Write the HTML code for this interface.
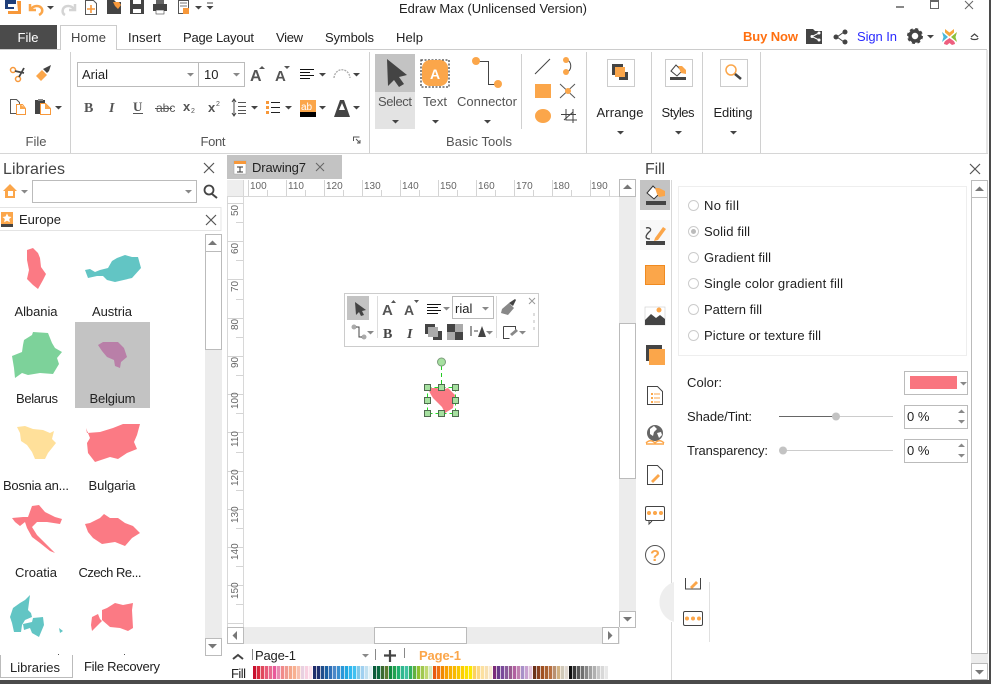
<!DOCTYPE html>
<html><head><meta charset="utf-8"><title>Edraw Max</title>
<style>
html,body{margin:0;padding:0;background:#fff;width:991px;height:684px;overflow:hidden}
svg{display:block;position:absolute;left:0;top:0}
text{font-family:"Liberation Sans","Noto Sans CJK SC",sans-serif;font-size:13px;fill:#222}
.s{font-size:12.5px}
.l{font-size:16px;fill:#444}
.g{fill:#555}
.r{font-size:10px;fill:#666}
.m{text-anchor:middle}
</style></head><body>
<svg width="991" height="684" viewBox="0 0 991 684" xmlns="http://www.w3.org/2000/svg">
<defs>
<path id="a" d="M0 0h7l-3.500 3.500z" fill="#444"/>
<path id="ag" d="M0 0h7l-3.500 3.500z" fill="#888"/>
<path id="x" d="M0 0l10 10M10 0l-10 10" stroke="#555" stroke-width="1.200" fill="none"/>
</defs>
<rect width="991" height="684" fill="#fff"/>

<!-- quick access -->
<path d="M5 0h11v4h-8v3h6v2h-6v0h-3z" fill="#1f3f7a"/><path d="M17 1h4v13h-13v-3h10z" fill="#f7983a"/>
<path d="M30 4v6h6M31 9c3-4 9-4 11 0 1 3-1 5-3 6" fill="none" stroke="#fba64a" stroke-width="2.500"/>
<use href="#a" x="47" y="6"/>
<path d="M75 4v6h-6M74 9c-3-4-9-4-11 0-1 3 0 5 2 6" fill="none" stroke="#d4d4d4" stroke-width="2.500"/>
<path d="M85.500 0.500h8l3 3v11h-11z" fill="#fff" stroke="#555"/><path d="M91 5v8M87 9h8" stroke="#f7983a" stroke-width="1.600"/>
<path d="M107 0h7l2 2h5v12h-14z" fill="#444"/><path d="M113 2h6l2 3-3 4-3-3z" fill="#f7983a"/>
<path d="M130 0h14v14h-14z" fill="#444"/><rect x="133" y="9" width="8" height="4" fill="#fff"/><rect x="133" y="0" width="8" height="4" fill="#fff"/>
<path d="M153 4h14v7h-14z" fill="#444"/><rect x="156" y="0" width="8" height="4" fill="#666"/><rect x="156" y="10" width="8" height="4" fill="#fff" stroke="#444" stroke-width=".6"/>
<path d="M178.500 .5h10v13h-10z" fill="#fff" stroke="#555"/><path d="M180 3h7M180 6h7" stroke="#777"/><path d="M183 8h6v6h-6z" fill="#f7983a"/>
<use href="#a" x="195" y="6"/>
<path d="M207 3h6" stroke="#444"/><use href="#a" x="206.500" y="6"/>

<text x="399" y="13" textLength="188" lengthAdjust="spacingAndGlyphs">Edraw Max (Unlicensed Version)</text>
<rect x="896" y="6" width="8" height="2" fill="#888"/>
<rect x="930.500" y="0.500" width="8" height="8" fill="none" stroke="#666"/><rect x="930" y="0" width="9" height="2" fill="#666"/>
<path d="M965 1l8 8M973 1l-8 8" stroke="#666" fill="none"/>

<!-- tab strip -->
<rect x="0" y="25" width="57" height="24" fill="#4b4b4b"/>
<text x="28" y="42" class="m" style="fill:#fff">File</text>
<path d="M60.500 50V25.500h56V50" fill="#fff" stroke="#ccc"/>
<path d="M0 49.500h60M117 49.500h870" stroke="#ccc"/>
<text x="71" y="42" style="fill:#444" textLength="35">Home</text>
<text x="128" y="42" textLength="33">Insert</text>
<text x="183" y="42" textLength="71">Page Layout</text>
<text x="276" y="42" textLength="27">View</text>
<text x="325" y="42" textLength="49">Symbols</text>
<text x="396" y="42" textLength="27">Help</text>
<text x="743" y="41" textLength="55" style="font-weight:bold;fill:#ff6f0f">Buy Now</text>
<path d="M806 29h7l2 2h7v13h-16z" fill="#444"/><path d="M819 33l-7 3.500 7 3.500" stroke="#fff" fill="none"/><circle cx="812" cy="36.500" r="1.500" fill="#fff"/><circle cx="819" cy="33" r="1.500" fill="#fff"/><circle cx="819" cy="40" r="1.500" fill="#fff"/>
<path d="M844 32l-7 5 7 5" stroke="#444" fill="none"/><circle cx="845" cy="32" r="2.500" fill="#444"/><circle cx="836" cy="37" r="2.500" fill="#444"/><circle cx="845" cy="42" r="2.500" fill="#444"/>
<text x="857" y="41" textLength="40" style="fill:#2a2aff">Sign In</text>
<circle cx="915" cy="36" r="5" fill="none" stroke="#444" stroke-width="3.500"/><circle cx="915" cy="36" r="7" fill="none" stroke="#444" stroke-width="2" stroke-dasharray="3 2.500"/>
<use href="#a" x="927" y="35"/>
<path d="M945 29l4.500 3.500 4.500-3.500v3.500l-4.500 4-4.500-4z" fill="#f7a63a"/><path d="M942 32l6 5-6 5 1.500-5z" fill="#4bb8d8"/><path d="M957 32l-6 5 6 5-1.500-5z" fill="#8cc03a"/><path d="M944 44c0-3 3-4 5.500-6 2.500 2 5.500 3 5.500 6l-3 1-2.500-2-2.500 2z" fill="#ee5f7f"/>
<path d="M971 37l3.500-3 3.500 3M971 38c0 2 7 2 7 0" fill="none" stroke="#444" stroke-width="1.200"/>

<!-- ribbon frame -->
<path d="M987 50v104" stroke="#ccc"/><rect x="0" y="153" width="988" height="1" fill="#d6d6d6"/>
<path d="M70.500 52v101M369.500 52v101M586.500 52v101M651.500 52v101M702.500 52v101M760.500 52v101" stroke="#d0d0d0"/>
<path d="M521.500 54v75" stroke="#d0d0d0"/>

<!-- file group -->
<circle cx="13" cy="70" r="2.500" fill="none" stroke="#f7983a" stroke-width="1.500"/><circle cx="18" cy="79" r="2.500" fill="none" stroke="#f7983a" stroke-width="1.500"/>
<path d="M15 71l9 2M19 77l5-9" stroke="#444" stroke-width="1.800"/>
<path d="M36 76l6-6 5 5-6 6z" fill="#fba64a"/><path d="M43 69l6-3 2-1-2 6-2 2z" fill="#444"/>
<path d="M10.500 99.500h6l3 3v11h-9z" fill="#fff" stroke="#555"/><path d="M16.500 104.500h6l3 4v6h-9z" fill="#fff" stroke="#f7983a"/><path d="M20 104l6 5h-6z" fill="#fba64a"/>
<path d="M35 100h10v14H35z" fill="#444"/><rect x="38" y="99" width="5" height="2" fill="#888"/><path d="M40.500 103.500h5l5 5v6h-10z" fill="#fff" stroke="#f7983a"/><path d="M45 103l6 6h-6z" fill="#fba64a"/>
<use href="#a" x="55" y="106"/>
<text x="36" y="146" class="m g" textLength="21">File</text>

<!-- font group -->
<rect x="77.500" y="62.500" width="121" height="24" fill="#fff" stroke="#bbb"/>
<rect x="198.500" y="62.500" width="46" height="24" fill="#fff" stroke="#bbb"/>
<text x="82" y="79" style="fill:#222">Arial</text><text x="204" y="79">10</text>
<use href="#ag" x="187" y="73"/><use href="#ag" x="233" y="73"/>
<text x="250" y="81" style="font-size:16px;font-weight:bold;fill:#555">A</text><path d="M259 69h6l-3-3z" fill="#555"/>
<text x="275" y="81" style="font-size:15px;font-weight:bold;fill:#555">A</text><path d="M284 66h6l-3 3z" fill="#555"/>
<path d="M300 69.500h14M300 72.500h10M300 75.500h14M300 78.500h10" stroke="#111"/><use href="#a" x="319" y="73"/>
<path d="M334 78c1-11 15-11 16 0" fill="none" stroke="#aaa" stroke-dasharray="2 1" stroke-width="1.300"/><use href="#a" x="353" y="73"/>
<text x="84" y="112" style="font-weight:bold;fill:#555;font-family:'Liberation Serif',serif;font-size:14px">B</text>
<text x="109" y="112" style="font-weight:bold;font-style:italic;fill:#555;font-family:'Liberation Serif',serif;font-size:14px">I</text>
<text x="133" y="111" style="font-weight:bold;fill:#555;font-family:'Liberation Serif',serif;font-size:13px">U</text><path d="M133 113.500h10" stroke="#555"/>
<text x="156" y="112" style="fill:#555;font-size:12px">abc</text><path d="M155 108.500h17" stroke="#555"/>
<text x="183" y="111" style="font-weight:bold;fill:#555;font-size:13px">x</text><text x="191" y="113" style="font-size:7px;fill:#555">2</text>
<text x="208" y="112" style="font-weight:bold;fill:#555;font-size:13px">x</text><text x="216" y="106" style="font-size:7px;fill:#555">2</text>
<path d="M234 100v15M232 102l2-3 2 3M232 113l2 3 2-3" fill="none" stroke="#444"/><path d="M238 102.500h8M238 106.500h8M238 110.500h8M238 113.500h8" stroke="#555"/><use href="#a" x="251" y="106"/>
<path d="M266 101h3v3h-3zM266 106h3v3h-3zM266 111h3v3h-3z" fill="#f7983a"/><path d="M271 102.500h9M271 107.500h9M271 112.500h9" stroke="#222"/><use href="#a" x="285" y="106"/>
<rect x="300" y="100" width="16" height="12" fill="#fba64a"/><rect x="300" y="112" width="16" height="5" fill="#000"/><text x="301" y="110" style="font-size:10px;fill:#fff">ab</text><use href="#a" x="319" y="106"/>
<path d="M334 117l6-17h4l6 17z" fill="#444"/><path d="M339 110h6l-3-7z" fill="#fff"/><use href="#a" x="353" y="106"/>
<text x="213" y="146" class="m g" textLength="25">Font</text>
<path d="M353.500 141v-4h6M356 139l4 4M360 140v3h-3" stroke="#555" fill="none"/>

<!-- basic tools -->
<rect x="375" y="54" width="40" height="38" fill="#c3c3c3"/><rect x="375" y="92" width="40" height="37" fill="#e3e3e3"/>
<path d="M387 59l20 16-8 2 5 7-5 3-5-7-6 6z" fill="#444"/>
<text x="395" y="106" class="m g" textLength="34">Select</text><use href="#a" x="392" y="120"/>
<rect x="421" y="60" width="28" height="27" fill="none" stroke="#444" stroke-width="1.300" stroke-dasharray="2 1.500"/>
<rect x="422" y="60" width="26" height="26" rx="8" fill="#fba64a"/>
<text x="435" y="79" class="m" style="fill:#fff;font-weight:bold;font-size:14px">A</text>
<text x="435" y="106" class="m g" textLength="24">Text</text><use href="#a" x="432" y="120"/>
<path d="M476 61.500h12.500v23H498" fill="none" stroke="#444"/><circle cx="476" cy="61" r="4" fill="#fba64a"/><circle cx="498" cy="84" r="4" fill="#fba64a"/>
<text x="487" y="106" class="m g" textLength="60">Connector</text><use href="#a" x="484" y="120"/>
<text x="479" y="146" class="m g" textLength="66">Basic Tools</text>

<path d="M535 74l15-15" stroke="#444"/>
<path d="M564 60c9-2 9 14 0 12" fill="none" stroke="#444"/><circle cx="566" cy="60" r="3" fill="#fba64a"/><circle cx="566" cy="72" r="3" fill="#fba64a"/>
<rect x="535" y="84" width="16" height="14" fill="#fba64a"/>
<path d="M560 84l15 14M575 84l-15 14" stroke="#555"/><circle cx="568" cy="91" r="3" fill="#fba64a"/>
<ellipse cx="543" cy="116" rx="8" ry="7" fill="#fba64a"/>
<path d="M561 114.500h15M573 109v14M566 109v11h11M564 120l9-8" stroke="#444" fill="none"/>

<!-- arrange / styles / editing -->
<rect x="607.500" y="59.500" width="27" height="27" fill="#fff" stroke="#ccc"/>
<rect x="612" y="64" width="11" height="11" fill="#444"/><rect x="619" y="72" width="9" height="8" fill="#444"/><rect x="615" y="67" width="10" height="10" fill="#fba64a"/>
<text x="620" y="117" class="m" textLength="47">Arrange</text><use href="#a" x="617" y="131"/>
<rect x="665.500" y="59.500" width="27" height="27" fill="#fff" stroke="#ccc"/>
<path d="M671 71l5-6 6 6-5 5z" fill="#fff" stroke="#444"/><path d="M678 66h4l4 4v4l-5-1z" fill="#fba64a"/><rect x="670" y="77" width="16" height="3" fill="#444"/>
<text x="678" y="117" class="m" textLength="33">Styles</text><use href="#a" x="675" y="131"/>
<rect x="720.500" y="59.500" width="27" height="27" fill="#fff" stroke="#ccc"/>
<circle cx="731" cy="70" r="5" fill="none" stroke="#fba64a" stroke-width="1.500"/><path d="M735 74l6 5" stroke="#444" stroke-width="2.500"/>
<text x="733" y="117" class="m" textLength="39">Editing</text><use href="#a" x="730" y="131"/>

<!-- LIBRARIES -->
<text x="3" y="174" class="l" textLength="62">Libraries</text>
<use href="#x" x="204" y="163"/>
<path d="M3 191l7-7 7 7h-2v7H5v-7z" fill="#fba64a"/><path d="M8 191h5v5H8z" fill="#fff"/>
<use href="#ag" x="21" y="190"/>
<rect x="32.500" y="180.500" width="164" height="22" fill="#fff" stroke="#bbb"/>
<use href="#ag" x="185" y="190"/>
<circle cx="209" cy="190" r="4.500" fill="none" stroke="#444" stroke-width="1.800"/><path d="M212 194l5 4" stroke="#444" stroke-width="2"/>
<rect x="-1" y="207.500" width="222" height="23" fill="#fff" stroke="#e4e4e4"/>
<rect x="1" y="212" width="12" height="12" fill="#fba64a"/><rect x="1" y="224" width="12" height="3" fill="#444"/><path d="M7 213.500l1.500 3 3 .5-2.300 2 .7 3.300-2.900-1.600-2.900 1.600.7-3.300-2.300-2 3-.5z" fill="#fff"/>
<text x="19" y="224">Europe</text>
<use href="#x" x="206" y="215"/>

<rect x="205" y="234" width="17" height="422" fill="#ececec"/>
<rect x="205.500" y="234.500" width="16" height="17" fill="#fff" stroke="#bbb"/><path d="M208 245h9l-4.500-4.500z" fill="#777"/>
<rect x="205.500" y="251.500" width="16" height="98" fill="#fff" stroke="#bbb"/>
<rect x="205.500" y="638.500" width="16" height="17" fill="#fff" stroke="#bbb"/><path d="M208 644h9l-4.500 4.500z" fill="#777"/>

<rect x="75" y="322" width="75" height="86" fill="#c3c3c3"/>
<polygon points="27,250 33,248 38,253 40,258 41,267 46,274 43,280 38,289 33,285 27,279 29,270 27,260" fill="#fb7a84"/>
<polygon points="85,270 90,269 95,272 100,270 108,268 112,261 117,258 125,255 132,257 138,257 141,268 132,278 115,282 107,280 103,276 97,276 88,278" fill="#62c5c4"/>
<polygon points="12,356 22,352 23,345 24,340 32,335 33,332 48,333 52,343 55,348 62,352 57,358 59,364 53,374 40,373 28,375 22,373 15,378 14,368 13,362" fill="#7dd29a"/>
<polygon points="98,345 103,342 118,342 124,348 127,357 121,362 120,368 115,366 114,360 107,357 102,351" fill="#b97fa8"/>
<polygon points="17,427 25,426 33,429 43,430 50,433 54,431 52,439 56,443 52,448 48,453 45,459 35,459 32,452 27,445 21,441 20,433" fill="#ffe09a"/>
<polygon points="86,428 87,433 100,432 113,428 123,424 140,424 137,435 134,442 137,449 127,453 118,459 110,457 95,462 88,453 87,443 90,438" fill="#fb7a84"/>
<polygon points="32,506 39,505 45,512 55,517 62,519 60,524 47,522 37,522 32,527 37,535 47,545 55,553 50,551 40,543 32,537 27,528 25,522 20,526 15,522 12,518 23,517 28,517" fill="#fb7a84"/>
<polygon points="85,524 90,523 100,518 104,514 110,518 118,518 125,523 133,526 140,533 132,538 125,546 115,542 102,544 93,538 88,532" fill="#fb7a84"/>
<path d="M10 617l3-9 7-5 5-3 5-5-2 15 3 3 1 4-7 3-3 5-1 7h-7l-2-9zM23 624l9-2 1-4 10-1 1 8-5 12-7-4-2-5-6 2zM59 628l4 3-3 2z" fill="#62c5c4"/>
<path d="M102 610l5-2 8-5 8 2 10-2-1 7 1 18-5 3-8-3-10-1-8-7zM92 617l6-3 2 5 2 2-10 10-1-6z" fill="#fb7a84"/>
<rect x="58" y="654" width="1" height="1" fill="#555"/><rect x="124" y="654" width="1" height="1" fill="#555"/>

<text x="36" y="316" class="m" textLength="43">Albania</text>
<text x="112" y="316" class="m" textLength="40">Austria</text>
<text x="37" y="403" class="m" textLength="42">Belarus</text>
<text x="112.500" y="403" class="m" textLength="46">Belgium</text>
<text x="36" y="490" class="m" textLength="66">Bosnia an...</text>
<text x="112" y="490" class="m" textLength="47">Bulgaria</text>
<text x="36" y="577" class="m" textLength="42">Croatia</text>
<text x="110" y="577" class="m" textLength="63">Czech Re...</text>

<path d="M0.500 655v22.500h72V655" fill="#fff" stroke="#bbb"/>
<text x="10" y="672" textLength="50">Libraries</text>
<text x="84" y="671" textLength="76">File Recovery</text>

<!-- TAB & RULERS -->
<rect x="227" y="155" width="115" height="24" fill="#c3c3c3"/>
<path d="M234 161h12v13h-12z" fill="#fff" stroke="#aaa" stroke-width=".6"/><rect x="234" y="161" width="12" height="3" fill="#f7983a"/><path d="M237 167h6M240 167v5M237 172h6" stroke="#333"/>
<text x="252" y="172" textLength="54">Drawing7</text>
<path d="M316 163l8 8M324 163l-8 8" stroke="#666" fill="none"/>

<rect x="227" y="179" width="393" height="18" fill="#fff"/>
<rect x="227" y="180" width="16" height="16" fill="#eee"/>
<path d="M227 196.500h393M243.500 180v447M227.500 197v430" stroke="#d8d8d8" fill="none"/>
<path d="M248.500 180v16M286.500 180v16M324.500 180v16M362.500 180v16M400.500 180v16M438.500 180v16M476.500 180v16M514.500 180v16M552.500 180v16M590.500 180v16M267.500 190v6M305.500 190v6M343.500 190v6M381.500 190v6M419.500 190v6M457.500 190v6M495.500 190v6M533.500 190v6M571.500 190v6M609.500 190v6" stroke="#d4d4d4"/>
<text x="250" y="189" class="r">100</text><text x="288" y="189" class="r">110</text><text x="326" y="189" class="r">120</text><text x="364" y="189" class="r">130</text><text x="402" y="189" class="r">140</text><text x="440" y="189" class="r">150</text><text x="478" y="189" class="r">160</text><text x="516" y="189" class="r">170</text><text x="553" y="189" class="r">180</text><text x="591" y="189" class="r">190</text>
<path d="M227 203.500h16M227 241.500h16M227 279.500h16M227 318.500h16M227 356.500h16M227 394.500h16M227 432.500h16M227 471.500h16M227 509.500h16M227 547.500h16M227 585.500h16M227 623.500h16M236 222.500h7M236 260.500h7M236 299.500h7M236 337.500h7M236 375.500h7M236 413.500h7M236 452.500h7M236 490.500h7M236 528.500h7M236 566.500h7M236 604.500h7" stroke="#d4d4d4"/>
<text class="r" transform="translate(238,216) rotate(-90)">50</text>
<text class="r" transform="translate(238,254) rotate(-90)">60</text>
<text class="r" transform="translate(238,292) rotate(-90)">70</text>
<text class="r" transform="translate(238,330) rotate(-90)">80</text>
<text class="r" transform="translate(238,368) rotate(-90)">90</text>
<text class="r" transform="translate(238,409) rotate(-90)">100</text>
<text class="r" transform="translate(238,447) rotate(-90)">110</text>
<text class="r" transform="translate(238,486) rotate(-90)">120</text>
<text class="r" transform="translate(238,523) rotate(-90)">130</text>
<text class="r" transform="translate(238,560) rotate(-90)">140</text>
<text class="r" transform="translate(238,599) rotate(-90)">150</text>

<!-- canvas scrollbars -->
<rect x="619" y="180" width="17" height="448" fill="#ececec"/>
<rect x="619.500" y="179.500" width="16" height="17" fill="#fff" stroke="#bbb"/><path d="M623 189h9l-4.500-4.500z" fill="#777"/>
<rect x="619.500" y="323.500" width="16" height="155" fill="#fff" stroke="#bbb"/>
<rect x="619.500" y="611.500" width="16" height="16" fill="#fff" stroke="#bbb"/><path d="M623 617h9l-4.500 4.500z" fill="#777"/>
<rect x="227" y="627" width="393" height="17" fill="#ececec"/>
<rect x="227.500" y="627.500" width="16" height="16" fill="#fff" stroke="#bbb"/><path d="M237 631v9l-4.500-4.500z" fill="#777"/>
<rect x="374.500" y="627.500" width="92" height="16" fill="#fff" stroke="#bbb"/>
<rect x="602.500" y="627.500" width="16" height="16" fill="#fff" stroke="#bbb"/><path d="M608 631v9l4.500-4.500z" fill="#777"/>

<!-- mini toolbar -->
<rect x="344.500" y="293.500" width="194" height="53" fill="#fff" stroke="#ccc"/>
<rect x="347" y="296" width="22" height="24" fill="#c3c3c3"/>
<path d="M355 302l11 8-4 1 2 4-3 1-2-4-3 3z" fill="#444"/>
<path d="M377.500 296v42M496.500 296v42" stroke="#ddd"/>
<text x="382" y="315" style="font-size:15px;font-weight:bold;fill:#555">A</text><path d="M391 303h5l-2.500-3z" fill="#555"/>
<text x="404" y="315" style="font-size:14px;font-weight:bold;fill:#555">A</text><path d="M414 300h5l-2.500 3z" fill="#555"/>
<path d="M427 304.500h14M427 307.500h11M427 310.500h14M427 313.500h11" stroke="#111"/><use href="#ag" x="443" y="307"/>
<rect x="452.500" y="296.500" width="41" height="22" fill="#fff" stroke="#bbb"/>
<text x="455" y="313" style="fill:#222">rial</text><use href="#ag" x="482" y="307"/>
<path d="M502 309l7-6 5 5-6 7-7-2z" fill="#888"/><path d="M509 303l6-4 1 1-3 6z" fill="#444"/>
<path d="M529 298l6 6M535 298l-6 6" stroke="#999"/>
<path d="M533 313h2v3h-2zM533 320h2v3h-2zM533 327h2v3h-2z" fill="#ddd"/>
<circle cx="354" cy="327" r="2.500" fill="#aaa"/><circle cx="364" cy="337" r="2.500" fill="#aaa"/><path d="M356 327h3v10h3" fill="none" stroke="#444"/><use href="#ag" x="367" y="331"/>
<text x="383" y="338" style="font-weight:bold;fill:#444;font-family:'Liberation Serif',serif;font-size:14px">B</text>
<text x="407" y="338" style="font-weight:bold;font-style:italic;fill:#444;font-family:'Liberation Serif',serif;font-size:14px">I</text>
<rect x="425" y="324" width="10" height="10" fill="#444"/><rect x="433" y="331" width="9" height="9" fill="#444"/><rect x="428" y="327" width="10" height="10" fill="#aaa"/>
<rect x="447" y="324" width="8" height="8" fill="#444"/><rect x="455" y="332" width="8" height="8" fill="#444"/><rect x="455" y="324" width="8" height="8" fill="#aaa"/><rect x="447" y="332" width="8" height="8" fill="#aaa"/>
<path d="M470 326v10h2v-10z" fill="#999"/><path d="M474 331h4" stroke="#444"/><path d="M478 337l4-11 4 11z" fill="#444"/><use href="#ag" x="486" y="331"/>
<path d="M503.500 326.500h12v3M503.500 326.500v12h6" fill="none" stroke="#444"/><path d="M510 334l6-5 2 2-6 5z" fill="#888"/><use href="#ag" x="519" y="331"/>

<!-- selected shape -->
<path d="M441.500 366v22" stroke="#22cc22" stroke-dasharray="4 3"/>
<circle cx="441.500" cy="362" r="4" fill="#a6e0a0" stroke="#7c9c7c"/>
<rect x="427.500" y="387.500" width="28" height="26" fill="none" stroke="#22dd22" stroke-dasharray="4 3"/>
<polygon points="428,388 437,388 442,390 448,388 455,395 453,408 445,413 442,407 433,398 430,393" fill="#fb7a84"/>
<g fill="#a6e0a0" stroke="#4f6b4f"><rect x="424.500" y="384.500" width="6" height="6"/><rect x="438.500" y="384.500" width="6" height="6"/><rect x="452.500" y="384.500" width="6" height="6"/><rect x="424.500" y="397.500" width="6" height="6"/><rect x="452.500" y="397.500" width="6" height="6"/><rect x="424.500" y="410.500" width="6" height="6"/><rect x="438.500" y="410.500" width="6" height="6"/><rect x="452.500" y="410.500" width="6" height="6"/></g>

<!-- page bar -->
<path d="M233 659l5-4 5 4" fill="none" stroke="#444" stroke-width="2"/>
<path d="M252.500 649v11M375.500 649v11M404.500 648v10" stroke="#888"/>
<text x="255" y="660" textLength="41">Page-1</text>
<use href="#ag" x="362" y="654"/>
<path d="M384 655.500h12M390 650v12" stroke="#444" stroke-width="2.200"/>
<text x="419" y="660" textLength="42" style="font-weight:bold;fill:#fba64a">Page-1</text>
<text x="231" y="678" textLength="15">Fill</text>
<g id="sw">
<rect x="253" y="666" width="4" height="13" fill="#c8102e"/><rect x="257" y="666" width="4" height="13" fill="#d8283c"/><rect x="261" y="666" width="4" height="13" fill="#e0485c"/><rect x="265" y="666" width="4" height="13" fill="#e85a78"/><rect x="269" y="666" width="4" height="13" fill="#e86a8f"/><rect x="273" y="666" width="4" height="13" fill="#e85a9a"/><rect x="277" y="666" width="4" height="13" fill="#e88ab0"/><rect x="281" y="666" width="4" height="13" fill="#f08a8a"/><rect x="285" y="666" width="4" height="13" fill="#f09a90"/><rect x="289" y="666" width="4" height="13" fill="#f4a68a"/><rect x="293" y="666" width="4" height="13" fill="#f8b090"/><rect x="297" y="666" width="4" height="13" fill="#f8c0b0"/><rect x="301" y="666" width="4" height="13" fill="#e8d0e0"/><rect x="305" y="666" width="4" height="13" fill="#f8d0e0"/><rect x="309" y="666" width="4" height="13" fill="#fce0ec"/>
<rect x="313" y="666" width="4" height="13" fill="#1f2d6b"/><rect x="317" y="666" width="4" height="13" fill="#203070"/><rect x="321" y="666" width="4" height="13" fill="#1f4e8c"/><rect x="325" y="666" width="4" height="13" fill="#1a5fa0"/><rect x="329" y="666" width="4" height="13" fill="#3070b8"/><rect x="333" y="666" width="4" height="13" fill="#4a88c8"/><rect x="337" y="666" width="4" height="13" fill="#3a90d0"/><rect x="341" y="666" width="4" height="13" fill="#2a98d8"/><rect x="345" y="666" width="4" height="13" fill="#20a8e0"/><rect x="349" y="666" width="4" height="13" fill="#30b8f0"/><rect x="353" y="666" width="4" height="13" fill="#40c0f0"/><rect x="357" y="666" width="4" height="13" fill="#80c8e8"/><rect x="361" y="666" width="4" height="13" fill="#a0d0f0"/><rect x="365" y="666" width="4" height="13" fill="#c0e0f0"/><rect x="369" y="666" width="4" height="13" fill="#e0f0f4"/>
<rect x="373" y="666" width="4" height="13" fill="#0a5a3a"/><rect x="377" y="666" width="4" height="13" fill="#0a6a40"/><rect x="381" y="666" width="4" height="13" fill="#3a6a30"/><rect x="385" y="666" width="4" height="13" fill="#5a7a30"/><rect x="389" y="666" width="4" height="13" fill="#0f8a40"/><rect x="393" y="666" width="4" height="13" fill="#20a050"/><rect x="397" y="666" width="4" height="13" fill="#20b070"/><rect x="401" y="666" width="4" height="13" fill="#30b890"/><rect x="405" y="666" width="4" height="13" fill="#40c0a0"/><rect x="409" y="666" width="4" height="13" fill="#30b060"/><rect x="413" y="666" width="4" height="13" fill="#60b040"/><rect x="417" y="666" width="4" height="13" fill="#90c030"/><rect x="421" y="666" width="4" height="13" fill="#a0c850"/><rect x="425" y="666" width="4" height="13" fill="#c0d870"/><rect x="429" y="666" width="4" height="13" fill="#d0e8c0"/>
<rect x="433" y="666" width="4" height="13" fill="#e85a10"/><rect x="437" y="666" width="4" height="13" fill="#f07010"/><rect x="441" y="666" width="4" height="13" fill="#f08a00"/><rect x="445" y="666" width="4" height="13" fill="#f8a000"/><rect x="449" y="666" width="4" height="13" fill="#f8b000"/><rect x="453" y="666" width="4" height="13" fill="#f8b800"/><rect x="457" y="666" width="4" height="13" fill="#f8c800"/><rect x="461" y="666" width="4" height="13" fill="#fcd000"/><rect x="465" y="666" width="4" height="13" fill="#fce000"/><rect x="469" y="666" width="4" height="13" fill="#fce800"/><rect x="473" y="666" width="4" height="13" fill="#fcd060"/><rect x="477" y="666" width="4" height="13" fill="#fcd880"/><rect x="481" y="666" width="4" height="13" fill="#fce0a0"/><rect x="485" y="666" width="4" height="13" fill="#f8e0b0"/><rect x="489" y="666" width="4" height="13" fill="#f8e8d0"/>
<rect x="493" y="666" width="4" height="13" fill="#7a2a7a"/><rect x="497" y="666" width="4" height="13" fill="#6a3a8a"/><rect x="501" y="666" width="4" height="13" fill="#7a4a9a"/><rect x="505" y="666" width="4" height="13" fill="#8a5a9a"/><rect x="509" y="666" width="4" height="13" fill="#9a5a90"/><rect x="513" y="666" width="4" height="13" fill="#b060a0"/><rect x="517" y="666" width="4" height="13" fill="#c080b0"/><rect x="521" y="666" width="4" height="13" fill="#a890c8"/><rect x="525" y="666" width="4" height="13" fill="#c8a0d0"/><rect x="529" y="666" width="4" height="13" fill="#e0c0d8"/>
<rect x="533" y="666" width="4" height="13" fill="#6a3018"/><rect x="537" y="666" width="4" height="13" fill="#8a4020"/><rect x="541" y="666" width="4" height="13" fill="#a05020"/><rect x="545" y="666" width="4" height="13" fill="#a86030"/><rect x="549" y="666" width="4" height="13" fill="#b87040"/><rect x="553" y="666" width="4" height="13" fill="#b89070"/><rect x="557" y="666" width="4" height="13" fill="#d0b080"/><rect x="561" y="666" width="4" height="13" fill="#d0c8b8"/><rect x="565" y="666" width="4" height="13" fill="#e0d8d0"/>
<rect x="569" y="666" width="4" height="13" fill="#101010"/><rect x="573" y="666" width="4" height="13" fill="#383838"/><rect x="577" y="666" width="4" height="13" fill="#585858"/><rect x="581" y="666" width="4" height="13" fill="#707070"/><rect x="585" y="666" width="4" height="13" fill="#888888"/><rect x="589" y="666" width="4" height="13" fill="#a0a0a0"/><rect x="593" y="666" width="4" height="13" fill="#b0b0b0"/><rect x="597" y="666" width="4" height="13" fill="#c8c8c8"/><rect x="601" y="666" width="4" height="13" fill="#d8d8d8"/><rect x="605" y="666" width="3" height="13" fill="#e8e8e8"/>
<path d="M256 672.500H608" stroke="#fff" stroke-opacity=".7" stroke-width="13" stroke-dasharray="1 3"/>
</g>

<!-- RIGHT PANEL -->
<text x="645" y="174" class="l" textLength="20">Fill</text>
<use href="#x" x="970" y="164"/>
<path d="M671.500 180v403M671.500 622v58" stroke="#d8d8d8"/>
<rect x="640" y="180" width="30" height="30" fill="#c3c3c3"/>
<path d="M647 193l6-7 7 7-6 6z" fill="#fff" stroke="#333"/><path d="M655 188h4l6 3v5l-6 1-2-3z" fill="#fba64a"/><rect x="646" y="201" width="20" height="4" fill="#444"/>
<rect x="640" y="220" width="30" height="30" fill="#f8f8f8"/>
<path d="M650 239c-6 0-4-4-1-7 4-3 0-5-3-4" fill="none" stroke="#444" stroke-width="1.300"/><path d="M655 238l8-11 3 2-8 11-4 1z" fill="#fba64a"/><rect x="646" y="241" width="19" height="4" fill="#444"/>
<rect x="645.500" y="265.500" width="19" height="19" fill="#fba64a" stroke="#f08a20"/>
<rect x="645" y="307" width="20" height="18" fill="#fff" stroke="#ccc" stroke-width=".6"/><path d="M645 320l6-6 5 4 4-3 5 4v6h-20z" fill="#444"/><circle cx="659" cy="310" r="2.500" fill="#fba64a"/>
<rect x="646" y="345" width="16" height="16" fill="#444"/><rect x="649" y="349" width="16" height="16" fill="#fba64a"/>
<path d="M647.500 386.500h10l5 5v13h-15z" fill="#fff" stroke="#444"/><path d="M651 393h2v2h-2zM651 397h2v2h-2zM651 401h2v2h-2z" fill="#fba64a"/><path d="M654 394h6M654 398h6M654 402h6" stroke="#fba64a"/>
<circle cx="655" cy="433" r="8" fill="#666"/><path d="M650 429l4-3 3 3-3 3-1 4-3-2zM657 433l4-1 1 3-3 3z" fill="#fff"/><path d="M646 443c3-3 6-3 9 0 3-3 6-3 9 0M646 444h18" fill="none" stroke="#fba64a" stroke-width="1.500"/>
<path d="M647.500 465.500h10l5 5v14h-15z" fill="#fff" stroke="#444"/><path d="M651 481l7-7 2 2-7 7z" fill="#fba64a"/>
<rect x="645.500" y="506.500" width="19" height="14" rx="1.500" fill="#fff" stroke="#444"/><path d="M649 521v3l3-3" fill="#fff" stroke="#444"/><circle cx="649" cy="513" r="2" fill="#fba64a"/><circle cx="655" cy="513" r="2" fill="#fba64a"/><circle cx="661" cy="513" r="2" fill="#fba64a"/>
<circle cx="655" cy="555" r="9.500" fill="#fff" stroke="#555"/>
<text x="655" y="561" class="m" style="font-size:16px;font-weight:bold;fill:#fba64a">?</text>

<path d="M674 582A21 21 0 0 0 674 622z" fill="#eee"/>
<path d="M685.500 578v11h15v-11" fill="#fff" stroke="#444"/><path d="M690 587l6-6 2 2-6 6z" fill="#fba64a"/>
<rect x="683.500" y="611.500" width="19" height="14" rx="1.500" fill="#fff" stroke="#444"/><circle cx="687" cy="618.500" r="2" fill="#fba64a"/><circle cx="693" cy="618.500" r="2" fill="#fba64a"/><circle cx="699" cy="618.500" r="2" fill="#fba64a"/>
<path d="M709.500 582v60" stroke="#e0e0e0"/>

<rect x="678.500" y="186.500" width="288" height="169" fill="#fff" stroke="#eee"/>
<g fill="#fff" stroke="#ccc"><circle cx="693.500" cy="205.500" r="5"/><circle cx="693.500" cy="231.500" r="5"/><circle cx="693.500" cy="257.500" r="5"/><circle cx="693.500" cy="283.500" r="5"/><circle cx="693.500" cy="309.500" r="5"/><circle cx="693.500" cy="335.500" r="5"/></g>
<circle cx="693.500" cy="231.500" r="2.500" fill="#bbb"/>
<text x="704" y="210" textLength="35">No fill</text>
<text x="704" y="236" textLength="46">Solid fill</text>
<text x="704" y="262" textLength="67">Gradient fill</text>
<text x="704" y="288" textLength="139">Single color gradient fill</text>
<text x="704" y="314" textLength="58">Pattern fill</text>
<text x="704" y="340" textLength="117">Picture or texture fill</text>

<text x="687" y="387" textLength="35">Color:</text>
<rect x="904.500" y="371.500" width="63" height="23" fill="#fff" stroke="#bbb"/>
<rect x="910" y="376" width="47" height="13" fill="#f9757f"/>
<use href="#ag" x="960" y="382"/>

<text x="687" y="421" textLength="65">Shade/Tint:</text>
<path d="M779 416.500h57" stroke="#666"/><path d="M836 416.500h57" stroke="#ccc"/><circle cx="836" cy="416.500" r="4" fill="#c3c3c3"/>
<rect x="904.500" y="405.500" width="63" height="23" fill="#fff" stroke="#bbb"/>
<text x="907" y="421">0 %</text>
<path d="M958 413h7l-3.500-3.500zM958 420h7l-3.500 3.500z" fill="#888"/>

<text x="687" y="455" textLength="81">Transparency:</text>
<path d="M783 450.500h110" stroke="#ccc"/><circle cx="783" cy="450.500" r="4" fill="#c3c3c3"/>
<rect x="904.500" y="439.500" width="63" height="23" fill="#fff" stroke="#bbb"/>
<text x="907" y="455">0 %</text>
<path d="M958 447h7l-3.500-3.500zM958 454h7l-3.500 3.500z" fill="#888"/>

<rect x="971" y="180" width="17" height="500" fill="#ececec"/>
<rect x="971.500" y="180.500" width="16" height="17" fill="#fff" stroke="#bbb"/><path d="M975 191h9l-4.500-4.500z" fill="#777"/>
<rect x="971.500" y="197.500" width="16" height="456" fill="#fff" stroke="#bbb"/>
<rect x="971.500" y="663.500" width="16" height="16" fill="#fff" stroke="#bbb"/><path d="M975 670h9l-4.500 4.500z" fill="#777"/>

<!-- window edges -->
<rect x="0" y="680" width="991" height="4" fill="#4b4b4b"/>
<rect x="989" y="0" width="2" height="684" fill="#4b4b4b"/>
</svg>
</body></html>
